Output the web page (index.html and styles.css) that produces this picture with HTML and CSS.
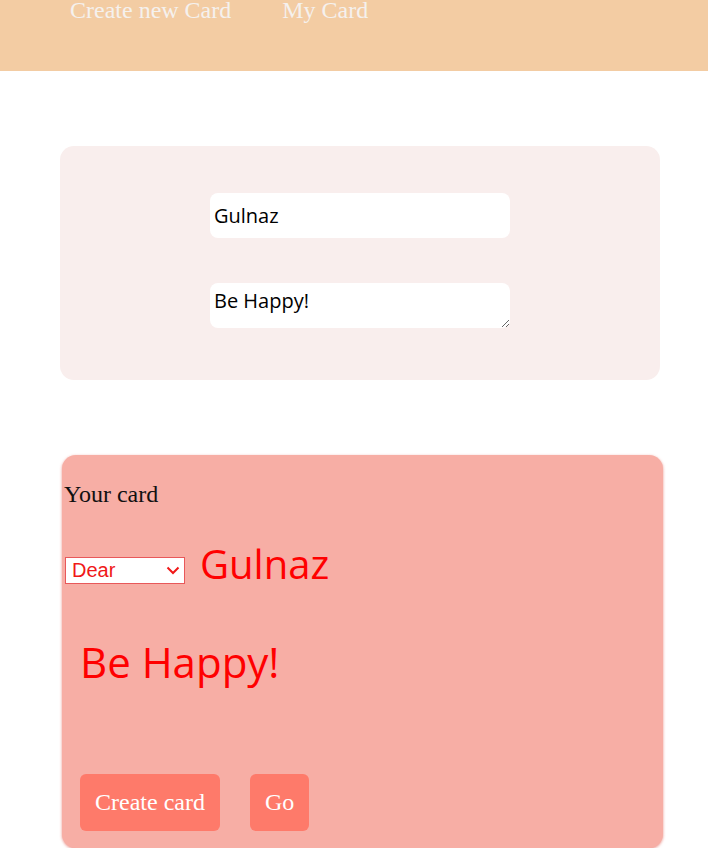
FILE: index.html
```html
<!DOCTYPE html>
<html lang="en">
<head>
<meta charset="utf-8">
<title>Card</title>
<link rel="stylesheet" href="styles.css">
</head>
<body>
<header class="topbar">
  <nav class="nav">
    <a class="nav-link" href="#">Create new Card</a>
    <a class="nav-link" href="#">My Card</a>
  </nav>
</header>
<main class="main">
  <section class="form-card">
    <input class="field" type="text" value="Gulnaz">
    <textarea class="field area">Be Happy!</textarea>
  </section>
  <section class="preview">
    <div class="preview-title">Your card</div>
    <div class="greeting">
      <div class="select-wrap">
        <select class="salutation">
          <option>Dear</option>
        </select>
        <svg class="chevron" width="14" height="9" viewBox="0 0 14 9"><path d="M1.5 1.5 L7 7 L12.5 1.5" fill="none" stroke="#f01818" stroke-width="2"/></svg>
      </div>
      <span class="name">Gulnaz</span>
    </div>
    <div class="message">Be Happy!</div>
    <div class="actions">
      <button class="btn">Create card</button>
      <button class="btn">Go</button>
    </div>
  </section>
</main>
</body>
</html>
```
FILE: styles.css
```css
html, body {
  margin: 0;
  padding: 0;
  background: #ffffff;
  font-family: "Liberation Serif", "Times New Roman", serif;
}

.topbar {
  height: 71px;
  background: #f3cca3;
  overflow: hidden;
}

.nav {
  display: flex;
  gap: 51px;
  padding-left: 70px;
  margin-top: -4px;
}

.nav-link {
  color: #f5f1ee;
  text-decoration: none;
  font-size: 24px;
  line-height: 28px;
}

.main {
  display: flex;
  flex-direction: column;
  padding-top: 75px;
  gap: 75px;
}

.form-card {
  margin-left: 60px;
  width: 600px;
  height: 234px;
  box-sizing: border-box;
  background: #f9eeed;
  border-radius: 14px;
  display: flex;
  flex-direction: column;
  align-items: center;
  padding-top: 47px;
  gap: 45px;
}

.field {
  width: 300px;
  height: 45px;
  box-sizing: border-box;
  border: none;
  border-radius: 8px;
  background: #ffffff;
  padding: 0 4px;
  font-family: "Comic Sans MS", "Open Sans", sans-serif;
  font-size: 20px;
  color: #000000;
  outline: none;
}

.area {
  padding-top: 4px;
  resize: vertical;
}

.preview {
  margin-left: 62px;
  width: 601px;
  height: 393px;
  box-sizing: border-box;
  background: #f7aea5;
  border-radius: 14px;
  box-shadow: 0 1px 3px rgba(230, 120, 110, 0.8);
  padding: 25px 0 0 2px;
  display: flex;
  flex-direction: column;
}

.preview-title {
  font-size: 24px;
  line-height: 28px;
  color: #111111;
}

.greeting {
  display: flex;
  align-items: flex-end;
  gap: 15px;
  margin-top: 33px;
  padding-left: 1px;
}

.select-wrap {
  position: relative;
  width: 120px;
  height: 27px;
  margin-bottom: 0;
}

.salutation {
  appearance: none;
  -webkit-appearance: none;
  width: 120px;
  height: 27px;
  box-sizing: border-box;
  border: 1px solid #e8585a;
  border-radius: 0;
  background: #ffffff;
  color: #f01818;
  font-family: "Liberation Sans", Arial, sans-serif;
  font-size: 20px;
  line-height: 25px;
  padding: 0 0 0 6px;
  margin: 0;
}

.chevron {
  position: absolute;
  right: 5px;
  top: 9px;
  pointer-events: none;
}

.name {
  font-family: "Comic Sans MS", "Open Sans", sans-serif;
  font-size: 40px;
  line-height: 46px;
  color: #ff0000;
  margin-bottom: -3px;
}

.message {
  font-family: "Comic Sans MS", "Open Sans", sans-serif;
  font-size: 42px;
  line-height: 60px;
  color: #ff0000;
  margin-top: 48px;
  padding-left: 16px;
}

.actions {
  display: flex;
  gap: 30px;
  margin-top: auto;
  margin-bottom: 17px;
  padding-left: 16px;
}

.btn {
  background: #fe7a6a;
  color: #ffffff;
  border: none;
  border-radius: 6px;
  font-family: "Liberation Serif", "Times New Roman", serif;
  font-size: 24px;
  line-height: 28px;
  padding: 14px 15px 15px;
  cursor: pointer;
}
```
